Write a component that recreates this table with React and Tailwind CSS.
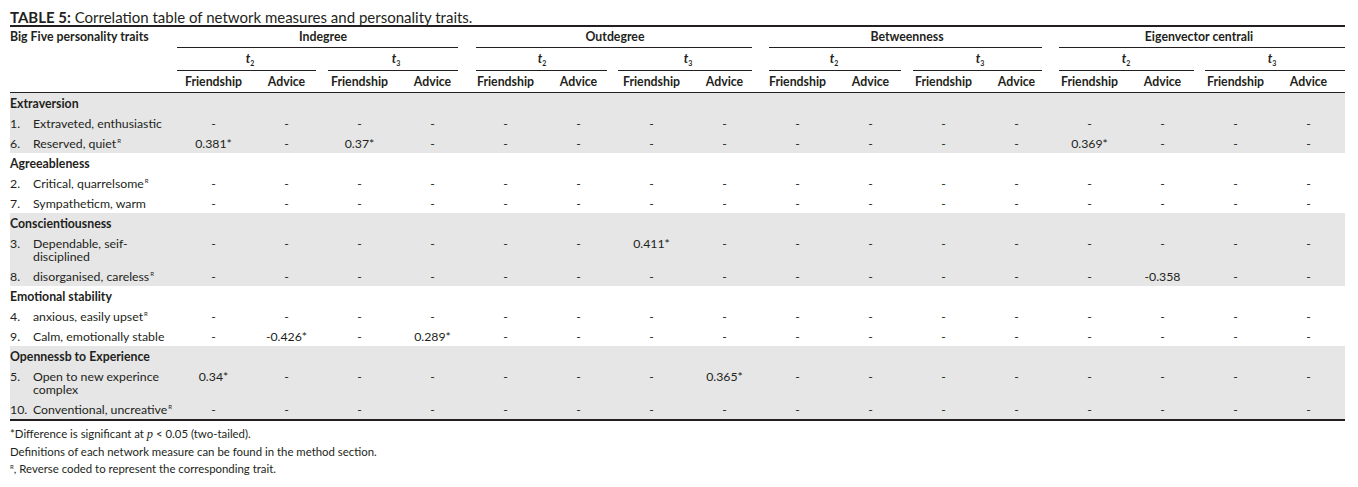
import React from "react";

const measures = [
  { name: "Indegree", line: "mr-[11px]" },
  { name: "Outdegree", line: "ml-[7px] mr-[9px]" },
  { name: "Betweenness", line: "ml-[8px] mr-[11px]" },
  { name: "Eigenvector centrali", line: "ml-[6px]" },
];

const waves = [
  { t: "2", line: "mr-[7px]" },
  { t: "3", line: "ml-[5px] mr-[11px]" },
  { t: "2", line: "ml-[7px] mr-[8px]" },
  { t: "3", line: "ml-[3px] mr-[9px]" },
  { t: "2", line: "ml-[8px] mr-[6px]" },
  { t: "3", line: "ml-[6px] mr-[11px]" },
  { t: "2", line: "ml-[6px] mr-[5px]" },
  { t: "3", line: "ml-[6px]" },
];

const groups = [
  {
    title: "Extraversion",
    shade: true,
    items: [
      { n: "1.", lines: ["Extraveted, enthusiastic"] },
      { n: "6.", lines: ["Reserved, quiet"], r: true, v: { 0: "0.381*", 2: "0.37*", 12: "0.369*" } },
    ],
  },
  {
    title: "Agreeableness",
    shade: false,
    items: [
      { n: "2.", lines: ["Critical, quarrelsome"], r: true },
      { n: "7.", lines: ["Sympatheticm, warm"] },
    ],
  },
  {
    title: "Conscientiousness",
    shade: true,
    items: [
      { n: "3.", lines: ["Dependable, seif-", "disciplined"], v: { 6: "0.411*" } },
      { n: "8.", lines: ["disorganised, careless"], r: true, v: { 13: "-0.358" } },
    ],
  },
  {
    title: "Emotional stability",
    shade: false,
    items: [
      { n: "4.", lines: ["anxious, easily upset"], r: true },
      { n: "9.", lines: ["Calm, emotionally stable"], v: { 1: "-0.426*", 3: "0.289*" } },
    ],
  },
  {
    title: "Opennessb to Experience",
    shade: true,
    items: [
      { n: "5.", lines: ["Open to new experince", "complex"], v: { 0: "0.34*", 7: "0.365*" } },
      { n: "10.", lines: ["Conventional, uncreative"], r: true },
    ],
  },
];

const grid = "grid grid-cols-[167px_repeat(16,73px)]";
const R = () => <sup className="text-[6px] relative top-[-5px] ml-[1px]">R</sup>;

const Row = ({ item }) => (
  <div className={`${grid} pt-[4px] pb-[3px] leading-[13px]`}>
    <div className="flex">
      <span className="w-[23px] shrink-0">{item.n}</span>
      <span className="whitespace-nowrap">
        {item.lines.map((l, i) => (
          <div key={i}>
            {l}
            {item.r && i === item.lines.length - 1 && <R />}
          </div>
        ))}
      </span>
    </div>
    {Array.from({ length: 16 }).map((_, c) => (
      <div key={c} className="text-center">
        {(item.v && item.v[c]) || "-"}
      </div>
    ))}
  </div>
);

export default function App() {
  return (
    <div className="w-[1358px] h-[487px] bg-white pl-[10px] pt-[9px] font-['Lato',sans-serif] text-[12.3px] text-[#231f20]">
      <div className="w-[1335px]">
        <div className="text-[15px] leading-[16px]">
          <span className="font-bold">TABLE 5:</span> Correlation table of network measures and personality traits.
        </div>
        <div className="border-t-2 border-[#231f20]" />

        {/* header */}
        <div className={`${grid} grid-rows-[21px_23px_21px] border-b border-[#231f20] font-bold`}>
          <div className="row-span-3 pt-[3px] leading-[13px]">Big Five personality traits</div>
          {measures.map((m) => (
            <div key={m.name} className="col-span-4 flex flex-col">
              <div className="h-[20px] pt-[3px] leading-[13px] text-center">{m.name}</div>
              <div className={`border-b border-[#231f20] ${m.line}`} />
            </div>
          ))}
          {waves.map((w, i) => (
            <div key={i} className="col-span-2 flex flex-col">
              <div className="h-[22px] pt-[4px] leading-[13px] text-center">
                <span className="italic">t</span>
                <sub className="text-[7px] relative top-[3px]">{w.t}</sub>
              </div>
              <div className={`border-b border-[#231f20] ${w.line}`} />
            </div>
          ))}
          {Array.from({ length: 16 }).map((_, c) => (
            <div key={c} className="pt-[4px] leading-[13px] text-center">
              {c % 2 === 0 ? "Friendship" : "Advice"}
            </div>
          ))}
        </div>

        {/* body */}
        <div className="border-b-2 border-[#231f20]">
          {groups.map((g) => (
            <div key={g.title} className={g.shade ? "bg-[#e6e6e6]" : "bg-white"}>
              <div className="pt-[4px] pb-[3px] leading-[13px] font-bold">{g.title}</div>
              {g.items.map((it) => (
                <Row key={it.n} item={it} />
              ))}
            </div>
          ))}
        </div>

        {/* notes */}
        <div className="pt-[4px] text-[11.4px] leading-[17px]">
          <div>
            *Difference is significant at <span className="italic font-['Liberation_Serif',serif] text-[12.5px]">p</span> &lt; 0.05 (two-tailed).
          </div>
          <div>Definitions of each network measure can be found in the method section.</div>
          <div>
            <sup className="text-[6px] relative top-[-4px]">R</sup>, Reverse coded to represent the corresponding trait.
          </div>
        </div>
      </div>
    </div>
  );
}
